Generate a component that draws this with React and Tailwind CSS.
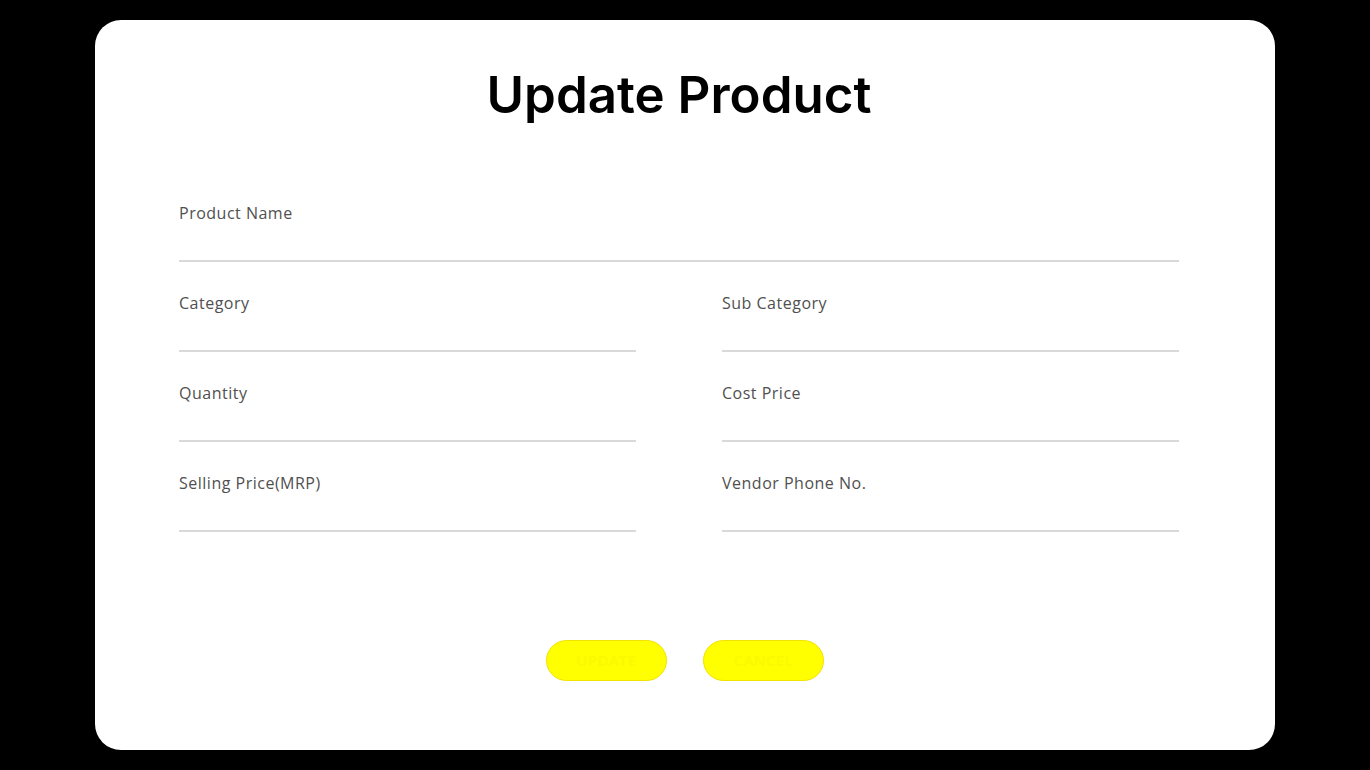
import { useState } from 'react';

const Field = ({ label, value, onChange }) => (
    <div className="flex flex-col">
        <label className="text-[16px] leading-6 tracking-[0.5px] text-[#505050]">{label}</label>
        <input
            value={value}
            onChange={onChange}
            className="h-[37px] border-b-2 border-[#d9d9d9] outline-none bg-transparent text-[15px] text-[#222]"
        />
    </div>
);

export default function App() {
    const [form, setForm] = useState({
        name: '', category: '', subCategory: '', quantity: '', cost: '', mrp: '', phone: ''
    });

    const set = key => e => setForm({ ...form, [key]: e.target.value });

    return (
        <div className="min-h-[770px] bg-black pt-5 pb-5 px-[95px]" style={{ fontFamily: '"Open Sans", Lato, sans-serif' }}>
            <div className="bg-white rounded-[26px] h-[730px] pt-[44px] px-[84px] flex flex-col">
                <h1 className="text-center text-[51px] leading-[62px] font-semibold text-black pr-[12px]" style={{ fontFamily: 'Inter, "Open Sans", sans-serif' }}>
                    Update Product
                </h1>

                <div className="mt-[75px] w-[1000px] flex flex-col gap-[29px]">
                    <Field label="Product Name" value={form.name} onChange={set('name')} />
                    <div className="grid grid-cols-2 gap-x-[86px] gap-y-[29px]">
                        <Field label="Category" value={form.category} onChange={set('category')} />
                        <Field label="Sub Category" value={form.subCategory} onChange={set('subCategory')} />
                        <Field label="Quantity" value={form.quantity} onChange={set('quantity')} />
                        <Field label="Cost Price" value={form.cost} onChange={set('cost')} />
                        <Field label="Selling Price(MRP)" value={form.mrp} onChange={set('mrp')} />
                        <Field label="Vendor Phone No." value={form.phone} onChange={set('phone')} />
                    </div>
                </div>

                <div className="mt-[108px] flex justify-center gap-[36px]">
                    <button className="w-[121px] h-[41px] rounded-full bg-[#ffff00] border border-[#f2e200] text-[#fbf900] text-[15px] font-semibold tracking-wide">
                        UPDATE
                    </button>
                    <button className="w-[121px] h-[41px] rounded-full bg-[#ffff00] border border-[#f2e200] text-[#fbf900] text-[15px] font-semibold tracking-wide">
                        CANCEL
                    </button>
                </div>
            </div>
        </div>
    );
}
